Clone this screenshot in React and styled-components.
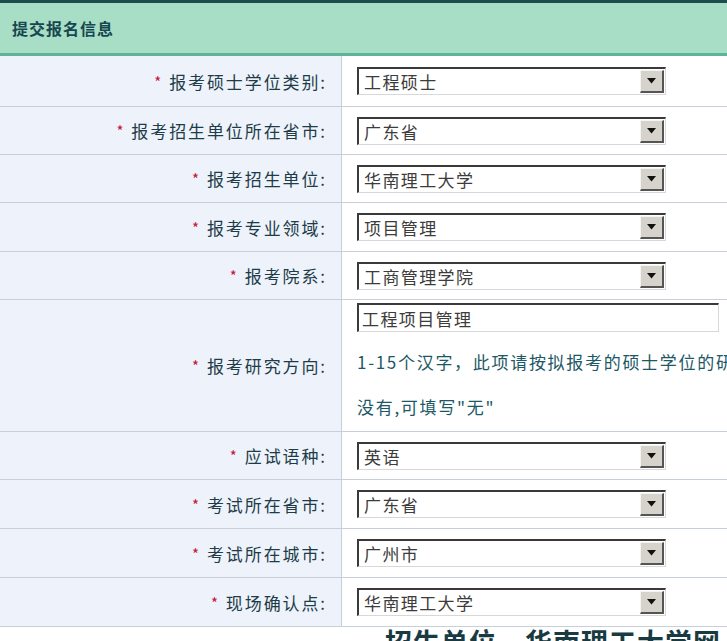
import React from "react";
import styled, { createGlobalStyle } from "styled-components";

const Global = createGlobalStyle`
	html, body {
		margin: 0;
		padding: 0;
		background: #ffffff;
		overflow: hidden;
	}
	body {
		font-family: "Noto Sans CJK SC", "DejaVu Sans", sans-serif;
	}
`;

const Page = styled.div`
	width: 780px;
`;

const Header = styled.div`
	height: 50px;
	border-top: 3px solid #1f4c4e;
	border-bottom: 3px solid #5bb596;
	background: #a8dec5;
	display: flex;
	align-items: center;
	padding-left: 12px;
	font-size: 16px;
	font-weight: 700;
	color: #17474f;
	letter-spacing: 1px;
`;

const Row = styled.div`
	display: grid;
	grid-template-columns: 342px 1fr;
	height: ${({ h }) => h || 47}px;
	border-bottom: 1px solid #c7cfda;
`;

const Label = styled.div`
	background: #eef3fb;
	border-right: 1px solid #c7cfda;
	display: flex;
	align-items: center;
	justify-content: flex-end;
	padding-right: 14px;
	font-size: 17px;
	color: #1e3c48;
	letter-spacing: 1.9px;
`;

const Star = styled.span`
	color: #c4123a;
	margin-right: 6px;
	font-size: 15px;
`;

const Field = styled.div`
	display: flex;
	flex-direction: column;
	justify-content: ${({ top }) => (top ? "flex-start" : "center")};
	padding: ${({ top }) => (top ? "3px 0 0 15px" : "0 0 0 15px")};
`;

const Select = styled.div`
	width: 309px;
	height: 28px;
	box-sizing: border-box;
	border-top: 2px solid #3a3a3a;
	border-left: 2px solid #3a3a3a;
	border-right: 1px solid #d8d8d8;
	border-bottom: 1px solid #d8d8d8;
	background: #ffffff;
	display: flex;
	align-items: center;
	justify-content: space-between;
	font-size: 17px;
	color: #3c3c3c;
	padding-left: 5px;
	letter-spacing: 1.4px;
`;

const Arrow = styled.div`
	width: 24px;
	height: 23px;
	box-sizing: border-box;
	background: #d6d3cc;
	border-top: 1px solid #f4f4f4;
	border-left: 1px solid #f4f4f4;
	border-right: 2px solid #555;
	border-bottom: 2px solid #555;
	display: flex;
	align-items: center;
	justify-content: center;
	margin-right: 1px;
`;

const TextInput = styled.div`
	width: 362px;
	height: 29px;
	box-sizing: border-box;
	border-top: 2px solid #3a3a3a;
	border-left: 2px solid #3a3a3a;
	border-right: 1px solid #d8d8d8;
	border-bottom: 1px solid #d8d8d8;
	display: flex;
	align-items: center;
	padding-left: 3px;
	font-size: 17px;
	color: #3c3c3c;
	letter-spacing: 1.4px;
`;

const Hint = styled.div`
	margin-top: 7px;
	font-size: 17px;
	line-height: 45px;
	color: #1d5866;
	white-space: nowrap;
	letter-spacing: 1.7px;
`;

const Footer = styled.div`
	padding: 0 0 0 385px;
	font-size: 27px;
	line-height: 30px;
	font-weight: 700;
	color: #1a3a42;
	white-space: nowrap;
	letter-spacing: 1px;
`;

const DropSelect = ({ value }) => (
	<Select>
		<span>{value}</span>
		<Arrow>
			<svg width="9" height="6" viewBox="0 0 9 6">
				<path d="M0 0h9L4.5 5.5z" fill="#111" />
			</svg>
		</Arrow>
	</Select>
);

const rowsTop = [
	["报考硕士学位类别:", "工程硕士", 50],
	["报考招生单位所在省市:", "广东省"],
	["报考招生单位:", "华南理工大学"],
	["报考专业领域:", "项目管理", 48],
	["报考院系:", "工商管理学院"],
];

const rowsBottom = [
	["应试语种:", "英语"],
	["考试所在省市:", "广东省", 48],
	["考试所在城市:", "广州市", 48],
	["现场确认点:", "华南理工大学", 48],
];

export default function App() {
	return (
		<Page>
			<Global />
			<Header>提交报名信息</Header>
			{rowsTop.map(([label, value, h]) => (
				<Row key={label} h={h}>
					<Label>
						<Star>*</Star>
						{label}
					</Label>
					<Field>
						<DropSelect value={value} />
					</Field>
				</Row>
			))}
			<Row h={131}>
				<Label>
					<Star>*</Star>
					报考研究方向:
				</Label>
				<Field top>
					<TextInput>工程项目管理</TextInput>
					<Hint>
						1-15个汉字，此项请按拟报考的硕士学位的研究方向填写，
						<br />
						没有,可填写"无"
					</Hint>
				</Field>
			</Row>
			{rowsBottom.map(([label, value, h]) => (
				<Row key={label} h={h}>
					<Label>
						<Star>*</Star>
						{label}
					</Label>
					<Field>
						<DropSelect value={value} />
					</Field>
				</Row>
			))}
			<Footer>招生单位，华南理工大学网上报名</Footer>
		</Page>
	);
}
